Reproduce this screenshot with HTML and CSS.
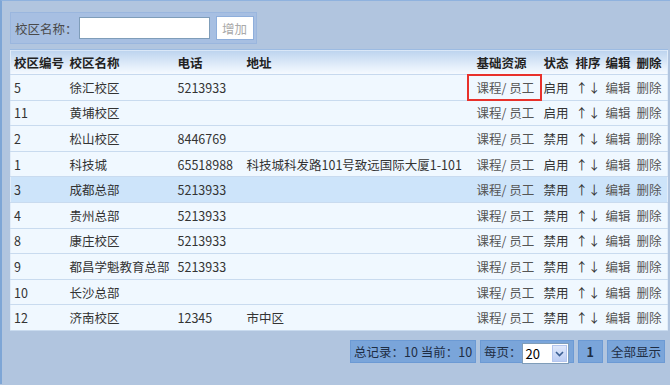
FILE: index.html
```html
<!DOCTYPE html>
<html lang="zh-CN">
<head>
  <meta charset="UTF-8" />
  <title>校区管理</title>
  <link rel="stylesheet" href="styles.css">
</head>
<body>
<div class="page">

  <div class="search-box">
    <label>校区名称：</label>
    <input type="text" class="search-input">
    <button class="btn-add">增加</button>
  </div>

  <table class="grid">
    <colgroup>
      <col style="width:56px">
      <col style="width:108px">
      <col style="width:69px">
      <col style="width:224px">
      <col style="width:73px">
      <col style="width:32px">
      <col style="width:30px">
      <col style="width:31px">
      <col style="width:34px">
    </colgroup>
    <thead>
      <tr>
        <th>校区编号</th>
        <th>校区名称</th>
        <th>电话</th>
        <th>地址</th>
        <th>基础资源</th>
        <th>状态</th>
        <th>排序</th>
        <th>编辑</th>
        <th>删除</th>
      </tr>
    </thead>
    <tbody>
      <tr>
        <td>5</td><td>徐汇校区</td><td>5213933</td><td></td>
        <td class="gray mark">课程/ 员工</td><td>启用</td><td>↑↓</td><td class="gray">编辑</td><td class="gray">删除</td>
      </tr>
      <tr>
        <td>11</td><td>黄埔校区</td><td></td><td></td>
        <td class="gray">课程/ 员工</td><td>启用</td><td>↑↓</td><td class="gray">编辑</td><td class="gray">删除</td>
      </tr>
      <tr>
        <td>2</td><td>松山校区</td><td>8446769</td><td></td>
        <td class="gray">课程/ 员工</td><td>禁用</td><td>↑↓</td><td class="gray">编辑</td><td class="gray">删除</td>
      </tr>
      <tr>
        <td>1</td><td>科技城</td><td>65518988</td><td>科技城科发路101号致远国际大厦1-101</td>
        <td class="gray">课程/ 员工</td><td>启用</td><td>↑↓</td><td class="gray">编辑</td><td class="gray">删除</td>
      </tr>
      <tr class="selected">
        <td>3</td><td>成都总部</td><td>5213933</td><td></td>
        <td class="gray">课程/ 员工</td><td>禁用</td><td>↑↓</td><td class="gray">编辑</td><td class="gray">删除</td>
      </tr>
      <tr>
        <td>4</td><td>贵州总部</td><td>5213933</td><td></td>
        <td class="gray">课程/ 员工</td><td>禁用</td><td>↑↓</td><td class="gray">编辑</td><td class="gray">删除</td>
      </tr>
      <tr>
        <td>8</td><td>康庄校区</td><td>5213933</td><td></td>
        <td class="gray">课程/ 员工</td><td>禁用</td><td>↑↓</td><td class="gray">编辑</td><td class="gray">删除</td>
      </tr>
      <tr>
        <td>9</td><td>都昌学魁教育总部</td><td>5213933</td><td></td>
        <td class="gray">课程/ 员工</td><td>禁用</td><td>↑↓</td><td class="gray">编辑</td><td class="gray">删除</td>
      </tr>
      <tr>
        <td>10</td><td>长沙总部</td><td></td><td></td>
        <td class="gray">课程/ 员工</td><td>禁用</td><td>↑↓</td><td class="gray">编辑</td><td class="gray">删除</td>
      </tr>
      <tr>
        <td>12</td><td>济南校区</td><td>12345</td><td>市中区</td>
        <td class="gray">课程/ 员工</td><td>禁用</td><td>↑↓</td><td class="gray">编辑</td><td class="gray">删除</td>
      </tr>
    </tbody>
  </table>

  <div class="pager">
    <span class="pager-box">总记录：10 当前：10</span>
    <span class="pager-box per-page">每页：
      <span class="select">
        <span class="select-value">20</span>
        <span class="select-arrow">
          <svg width="9" height="6" viewBox="0 0 9 6"><path d="M1 1 L4.5 4.5 L8 1" fill="none" stroke="#3b5f93" stroke-width="1.6"/></svg>
        </span>
      </span>
    </span>
    <span class="pager-box page-num">1</span>
    <span class="pager-box">全部显示</span>
  </div>

</div>
</body>
</html>
```

FILE: styles.css
```css
html, body {
  margin: 0;
  padding: 0;
}
body {
  width: 670px;
  height: 385px;
  overflow: hidden;
  background-color: #b1c5df;
  font-family: "Noto Sans CJK SC", "Noto Sans", sans-serif;
  font-size: 12.5px;
  color: #333;
}
.page {
  height: 384px;
  border-left: 2px solid #7ea6d6;
  border-top: 1px solid #8fb2de;
  padding: 11px 0 0 8px;
  box-sizing: border-box;
}
.search-box {
  display: flex;
  align-items: center;
  width: 247px;
  height: 32px;
  padding: 0 0 0 4px;
  box-sizing: border-box;
  background-color: #a7bfe2;
  border: 1px solid #9ab6de;
  color: #4a4a4a;
}
.search-box label {
  white-space: nowrap;
}
.search-input {
  width: 131px;
  height: 22px;
  margin: 0 0 0 1px;
  padding: 0;
  box-sizing: border-box;
  border: 1px solid #7f9db9;
  background: #fff;
}
.btn-add {
  width: 38px;
  height: 24px;
  margin-left: 6px;
  padding: 0;
  font-family: inherit;
  font-size: 12.5px;
  color: #aaa;
  background: #fff;
  border: 1px solid #8eaedb;
}
.grid {
  table-layout: fixed;
  width: 657px;
  margin-top: 5px;
  border-collapse: collapse;
  border: 1px solid #e2edf9;
  background-color: #f0f8ff;
}
.grid th {
  height: 24px;
  padding: 0 0 0 3px;
  text-align: left;
  font-weight: bold;
  color: #222;
  white-space: nowrap;
  border-top: 1px solid #9cbbe2;
  border-bottom: 1px solid #c7d9ee;
  background: linear-gradient(#bcd3ee, #e6f0fb 70%, #f6faff);
}
.grid td {
  height: 24.6px;
  padding: 0 0 0 3px;
  white-space: nowrap;
  border-bottom: 1px solid #c9dbef;
  color: #333;
}
.grid th:nth-child(5), .grid td:nth-child(5) {
  padding-left: 9px;
}
.grid td.gray {
  color: #555;
}
.grid td.mark {
  outline: 2px solid #e8312b;
  outline-offset: -1px;
}
.grid tr.selected td {
  background-color: #cde4fa;
}
.pager {
  display: flex;
  justify-content: flex-end;
  gap: 4px;
  width: 655px;
  margin-top: 9px;
}
.pager-box {
  display: flex;
  align-items: center;
  height: 23px;
  padding: 0 3px;
  box-sizing: border-box;
  background-color: #7aa5da;
  border: 1px solid #6c9ad4;
  color: #1e2d44;
  white-space: nowrap;
}
.per-page {
  padding-right: 4px;
}
.page-num {
  font-weight: bold;
  padding: 0 8px;
}
.select {
  display: flex;
  align-items: center;
  justify-content: space-between;
  width: 47px;
  height: 21px;
  margin-top: 5px;
  box-sizing: border-box;
  border: 1px solid #7f9db9;
  background: #fff;
  color: #000;
  font-size: 13px;
}
.select-value {
  padding-left: 3px;
}
.select-arrow {
  display: flex;
  align-items: center;
  justify-content: center;
  width: 15px;
  height: 17px;
  margin-right: 1px;
  background: linear-gradient(#dfe8fb, #bccdf3);
  border: 1px solid #b4c6ee;
  box-sizing: border-box;
}
```
